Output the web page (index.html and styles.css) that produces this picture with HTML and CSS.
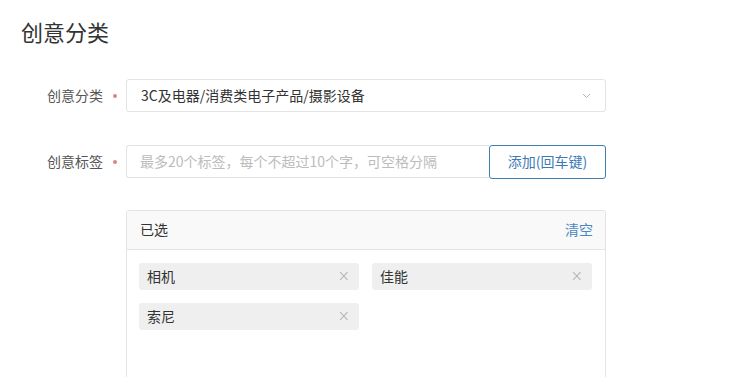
FILE: index.html
```html
<!DOCTYPE html>
<html lang="zh-CN">
<head>
    <meta charset="UTF-8">
    <title>创意分类</title>
    <link rel="stylesheet" href="styles.css">
</head>
<body>
    <div class="page">
        <h1 class="title">创意分类</h1>

        <div class="form-row row-category">
            <label class="label">创意分类</label>
            <span class="required"></span>
            <div class="select">
                <span class="select-text">3C及电器/消费类电子产品/摄影设备</span>
                <svg class="chevron" width="9" height="6" viewBox="0 0 9 6">
                    <path d="M1 1 L4.5 4.5 L8 1" fill="none" stroke="#b5b5b5" stroke-width="1"/>
                </svg>
            </div>
        </div>

        <div class="form-row row-tags">
            <label class="label">创意标签</label>
            <span class="required"></span>
            <div class="tag-input">
                <input class="input" type="text" placeholder="最多20个标签，每个不超过10个字，可空格分隔">
                <button class="btn-add">添加(回车键)</button>
            </div>
        </div>

        <div class="form-row row-panel">
            <div class="label"></div>
            <span class="required-space"></span>
            <div class="panel">
                <div class="panel-head">
                    <span>已选</span>
                    <a class="clear-link">清空</a>
                </div>
                <div class="tag-list">
                    <div class="tag"><span>相机</span><span class="tag-close">&#215;</span></div>
                    <div class="tag"><span>佳能</span><span class="tag-close">&#215;</span></div>
                    <div class="tag"><span>索尼</span><span class="tag-close">&#215;</span></div>
                </div>
            </div>
        </div>
    </div>
</body>
</html>
```

FILE: styles.css
```css
* {
    margin: 0;
    padding: 0;
    box-sizing: border-box;
    font-family: 'Noto Sans CJK SC', 'Microsoft YaHei', sans-serif;
}

body {
    background: #fff;
    color: #333;
    font-size: 14px;
}

.title {
    font-size: 22px;
    font-weight: normal;
    line-height: 32px;
    margin: 15px 0 0 21px;
    color: #333;
}

.form-row {
    display: flex;
    align-items: center;
}

.row-category {
    margin-top: 32px;
}

.row-tags {
    margin-top: 33px;
}

.row-panel {
    margin-top: 31px;
    align-items: flex-start;
}

.label {
    width: 103px;
    text-align: right;
    color: #555;
    font-size: 14px;
    padding-bottom: 2px;
}

.required,
.required-space {
    width: 23px;
    display: flex;
    justify-content: center;
}

.required::before {
    content: '';
    width: 4px;
    height: 4px;
    border-radius: 50%;
    background: #d98585;
}

.select {
    width: 480px;
    height: 33px;
    border: 1px solid #e3e3e3;
    border-radius: 3px;
    display: flex;
    align-items: center;
    justify-content: space-between;
    padding: 0 14px 2px 14px;
}

.select-text {
    color: #333;
}

.chevron {
    margin-top: 2px;
}

.tag-input {
    width: 480px;
    display: flex;
}

.input {
    flex: 1;
    height: 33px;
    border: 1px solid #e3e3e3;
    border-right: none;
    border-radius: 3px 0 0 3px;
    padding: 0 13px 2px;
    font-size: 14px;
    outline: none;
}

.input::placeholder {
    color: #bcbcbc;
}

.btn-add {
    width: 117px;
    height: 34px;
    border: 1px solid #3f7fb0;
    border-radius: 3px;
    background: #fff;
    color: #3b7ab5;
    font-size: 14px;
    padding-bottom: 2px;
    cursor: pointer;
}

.panel {
    width: 480px;
    height: 180px;
    border: 1px solid #e5e5e5;
    border-bottom: none;
    border-radius: 3px 3px 0 0;
}

.panel-head {
    height: 39px;
    background: #f9f9f9;
    border-bottom: 1px solid #e3e3e3;
    display: flex;
    align-items: center;
    justify-content: space-between;
    padding: 0 12px 2px 13px;
}

.clear-link {
    color: #4a88c2;
    cursor: pointer;
}

.tag-list {
    display: grid;
    grid-template-columns: 220px 220px;
    gap: 13px;
    padding: 13px 12px;
}

.tag {
    height: 27px;
    background: #efefef;
    border-radius: 3px;
    display: flex;
    align-items: center;
    justify-content: space-between;
    padding: 0 9px 2px 8px;
    color: #333;
}

.tag-close {
    color: #aaa;
    font-size: 15px;
    font-family: 'DejaVu Sans', sans-serif;
    font-weight: 300;
}
```
